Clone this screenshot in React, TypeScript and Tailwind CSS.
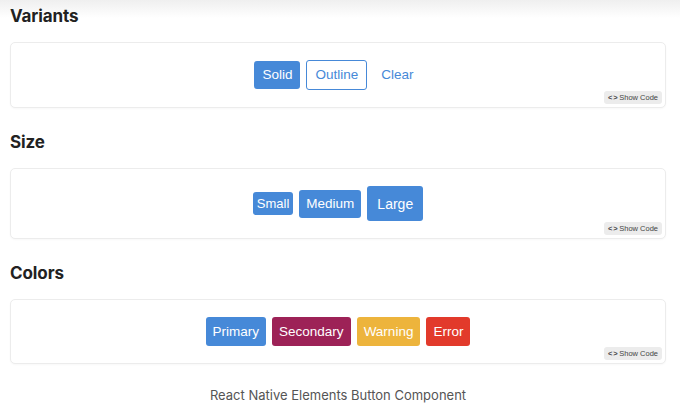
import React from "react";

const ShowCode: React.FC = () => (
  <div className="absolute right-[3px] bottom-[3px] flex items-center gap-[2px] rounded-[3px] bg-[#ececec] px-[4px] h-[13px] text-[7.5px] text-[#444] font-['Liberation_Sans',sans-serif]">
    <span className="font-bold tracking-[-0.5px]">&lt; &gt;</span>
    <span>Show Code</span>
  </div>
);

const Section: React.FC<{ title: string; first?: boolean; height: string; children: React.ReactNode }> = ({
  title,
  first,
  height,
  children,
}) => (
  <section className={first ? "pt-[4px]" : "pt-[22px]"}>
    <h2 className="h-[24px] mb-[14px] text-[17px] leading-[24px] font-bold text-[#222] font-['Inter',sans-serif] tracking-[-0.1px]">
      {title}
    </h2>
    <div
      className={`relative flex items-center justify-center gap-[6px] rounded-[5px] border border-[#ececec] bg-white shadow-[0_1px_2px_rgba(0,0,0,0.03)] ${height}`}
    >
      {children}
      <ShowCode />
    </div>
  </section>
);

// base look shared by every button; colour classes are added per button
const btn = "rounded-[3px] font-['Liberation_Sans',sans-serif] leading-none flex items-center justify-center";

const App: React.FC = () => {
  return (
    <div className="min-h-screen w-[680px] h-[403px] bg-gradient-to-b from-[#efefef] via-white via-[18px] to-white pl-[10px] pr-[14px] overflow-hidden">
      <Section title="Variants" first height="h-[66px]">
        <button className={`${btn} bg-[#4689d8] text-white h-[28px] px-[8px] text-[13.5px]`}>Solid</button>
        <button className={`${btn} bg-white border border-[#4689d8] text-[#4689d8] h-[30px] px-[8px] text-[13.5px]`}>
          Outline
        </button>
        <button className={`${btn} text-[#4689d8] h-[28px] px-[8px] text-[13.5px]`}>Clear</button>
      </Section>

      <Section title="Size" height="h-[71px]">
        <button className={`${btn} bg-[#4689d8] text-white h-[23px] px-[4px] text-[13px]`}>Small</button>
        <button className={`${btn} bg-[#4689d8] text-white h-[28px] px-[7px] text-[13.5px]`}>Medium</button>
        <button className={`${btn} bg-[#4689d8] text-white h-[35px] px-[10px] text-[14px]`}>Large</button>
      </Section>

      <Section title="Colors" height="h-[65px]">
        <button className={`${btn} bg-[#4689d8] text-white h-[29px] px-[7px] text-[13.5px]`}>Primary</button>
        <button className={`${btn} bg-[#9d2257] text-white h-[29px] px-[7px] text-[13.5px]`}>Secondary</button>
        <button className={`${btn} bg-[#edb43c] text-white h-[29px] px-[7px] text-[13.5px]`}>Warning</button>
        <button className={`${btn} bg-[#e23a2b] text-white h-[29px] px-[7px] text-[13.5px]`}>Error</button>
      </Section>

      <p className="mt-[22px] text-center text-[13px] text-[#555] font-['Inter',sans-serif]">
        React Native Elements Button Component
      </p>
    </div>
  );
};

export default App;
